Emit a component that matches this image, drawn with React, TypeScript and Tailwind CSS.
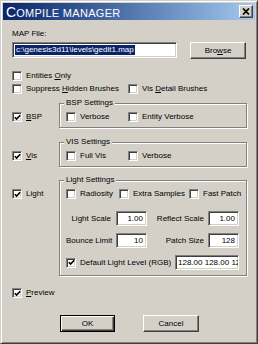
import React from "react";

const face = "font-['Liberation_Sans',Arial,sans-serif]";

const CheckBox: React.FC<{ checked?: boolean }> = ({ checked }) => (
  <span className="flex h-[10px] w-[10px] shrink-0 items-center justify-center border border-t-[#808080] border-l-[#808080] border-r-white border-b-white bg-white shadow-[inset_1px_1px_0_#404040,inset_-1px_-1px_0_#d4d0c8]">
    {checked && (
      <svg width="7" height="7" viewBox="0 0 7 7">
        <polyline points="0.8,3.2 2.6,5 6.2,1.2" fill="none" stroke="#000" strokeWidth="1.6" />
      </svg>
    )}
  </span>
);

// checkbox + caption; the caption may carry an underlined access key
const Check: React.FC<{ checked?: boolean; className?: string; children: React.ReactNode }> = ({
  checked,
  className = "",
  children,
}) => (
  <div className={`flex h-[10px] items-center gap-[4px] ${className}`}>
    <CheckBox checked={checked} />
    <span className="whitespace-nowrap leading-[10px]">{children}</span>
  </div>
);

const Button: React.FC<{ className?: string; isDefault?: boolean; children: React.ReactNode }> = ({
  className = "",
  isDefault,
  children,
}) =>
  isDefault ? (
    <div
      className={`flex h-[17px] items-center justify-center border border-black shadow-[inset_1px_1px_0_#fff,inset_-1px_-1px_0_#404040,inset_-2px_-2px_0_#808080] ${className}`}
    >
      {children}
    </div>
  ) : (
    <div
      className={`flex h-[17px] items-center justify-center border border-t-white border-l-white border-r-[#404040] border-b-[#404040] shadow-[inset_-1px_-1px_0_#808080] ${className}`}
    >
      {children}
    </div>
  );

const Field: React.FC<{ className?: string; children: React.ReactNode }> = ({ className = "", children }) => (
  <div
    className={`flex h-[15px] items-center justify-end whitespace-nowrap border border-t-[#808080] border-l-[#808080] border-r-white border-b-white bg-white pr-[3px] leading-[10px] shadow-[inset_1px_1px_0_#404040,inset_-1px_-1px_0_#d4d0c8] ${className}`}
  >
    {children}
  </div>
);

const Group: React.FC<{ title: string; children: React.ReactNode }> = ({ title, children }) => (
  <div className="w-[188px] border border-[#808080] pb-[5px] pl-[6px] shadow-[inset_1px_1px_0_#fff,1px_1px_0_#fff]">
    <div className="-mt-[6px] -ml-[2px] w-fit bg-[#d4d0c8] px-[2px] leading-[10px]">{title}</div>
    {children}
  </div>
);

export default function App() {
  return (
    <div
      className={`flex h-[344px] w-[258px] flex-col border border-t-[#d4d0c8] border-l-[#d4d0c8] border-r-[#404040] border-b-[#404040] bg-[#d4d0c8] p-[2px] text-[8px] text-black shadow-[inset_1px_1px_0_#fff,inset_-1px_-1px_0_#808080] ${face}`}
    >
      {/* Title bar */}
      <div className="flex h-[17px] shrink-0 items-center justify-between bg-linear-to-r from-[#0a246a] to-[#a6caf0] pl-[3px] pr-[2px]">
        <div className="flex items-end text-white font-['Liberation_Sans_Narrow','Liberation_Sans',sans-serif] leading-none">
          <span className="text-[14px]">C</span>
          <span className="text-[11px] tracking-[0.3px]">OMPILE MANAGER</span>
        </div>
        <div className="flex h-[13px] w-[14px] items-center justify-center border border-t-white border-l-white border-r-[#404040] border-b-[#404040] bg-[#d4d0c8] shadow-[inset_-1px_-1px_0_#808080]">
          <svg width="8" height="7" viewBox="0 0 8 7">
            <path d="M1 0.5 L7 6.5 M7 0.5 L1 6.5" stroke="#000" strokeWidth="1.7" />
          </svg>
        </div>
      </div>

      {/* Body */}
      <div className="flex flex-col pl-[9px] pr-[8px]">
        <div className="mt-[9px] leading-[10px]">MAP File:</div>

        <div className="mt-[3px] flex">
          <div className="flex h-[16px] w-[165px] items-center border border-t-[#808080] border-l-[#808080] border-r-white border-b-white bg-white pl-[2px] shadow-[inset_1px_1px_0_#404040,inset_-1px_-1px_0_#d4d0c8]">
            <span className="bg-[#0a246a] px-[1px] leading-[10px] text-white">
              {"c:\\genesis3d11\\levels\\gedit1.map"}
            </span>
          </div>
          <Button className="ml-[13px] h-[16px] w-[56px]">
            <span>
              Bro<span className="underline">w</span>se
            </span>
          </Button>
        </div>

        <Check className="mt-[12px]">
          Entities <span className="underline">O</span>nly
        </Check>

        <div className="mt-[3px] flex">
          <Check className="w-[116px]">
            Suppress <span className="underline">H</span>idden Brushes
          </Check>
          <Check>
            Vis <span className="underline">D</span>etail Brushes
          </Check>
        </div>

        {/* BSP */}
        <div className="mt-[9px] flex">
          <div className="w-[47px] pt-[9px]">
            <Check checked>
              <span className="underline">B</span>SP
            </Check>
          </div>
          <Group title="BSP Settings">
            <div className="mt-[4px] flex">
              <Check className="w-[62px]">Verbose</Check>
              <Check>Entity Verbose</Check>
            </div>
          </Group>
        </div>

        {/* VIS */}
        <div className="mt-[14px] flex">
          <div className="w-[47px] pt-[9px]">
            <Check checked>
              <span className="underline">V</span>is
            </Check>
          </div>
          <Group title="VIS Settings">
            <div className="mt-[4px] flex">
              <Check className="w-[62px]">Full Vis</Check>
              <Check>Verbose</Check>
            </div>
          </Group>
        </div>

        {/* Light */}
        <div className="mt-[13px] flex">
          <div className="w-[47px] pt-[9px]">
            <Check checked>Light</Check>
          </div>
          <Group title="Light Settings">
            <div className="mt-[4px] flex">
              <Check className="w-[53px]">Radiosity</Check>
              <Check className="w-[70px]">Extra Samples</Check>
              <Check>Fast Patch</Check>
            </div>

            <div className="mt-[12px] flex items-center">
              <span className="w-[45px] whitespace-nowrap text-right leading-[10px]">Light Scale</span>
              <Field className="ml-[5px] w-[31px]">1.00</Field>
              <span className="ml-[5px] w-[52px] whitespace-nowrap text-right leading-[10px]">Reflect Scale</span>
              <Field className="ml-[4px] w-[31px]">1.00</Field>
            </div>

            <div className="mt-[7px] flex items-center">
              <span className="w-[45px] whitespace-nowrap text-right leading-[10px]">Bounce Limit</span>
              <Field className="ml-[5px] w-[31px]">10</Field>
              <span className="ml-[5px] w-[52px] whitespace-nowrap text-right leading-[10px]">Patch Size</span>
              <Field className="ml-[4px] w-[31px]">128</Field>
            </div>

            <div className="mt-[7px] flex items-center">
              <Check checked className="w-[109px]">
                Default Light Level (RGB)
              </Check>
              <input
                readOnly
                value="128.00 128.00 128.00"
                className="h-[15px] w-[64px] border border-t-[#808080] border-l-[#808080] border-r-white border-b-white bg-white pl-[2px] text-[8px] leading-[10px] text-black shadow-[inset_1px_1px_0_#404040,inset_-1px_-1px_0_#d4d0c8] outline-none"
              />
            </div>
          </Group>
        </div>

        <Check checked className="mt-[12px]">
          <span className="underline">P</span>review
        </Check>

        <div className="mt-[17px] flex">
          <Button isDefault className="ml-[48px] w-[55px]">
            OK
          </Button>
          <Button className="ml-[28px] w-[56px]">Cancel</Button>
        </div>
      </div>
    </div>
  );
}
